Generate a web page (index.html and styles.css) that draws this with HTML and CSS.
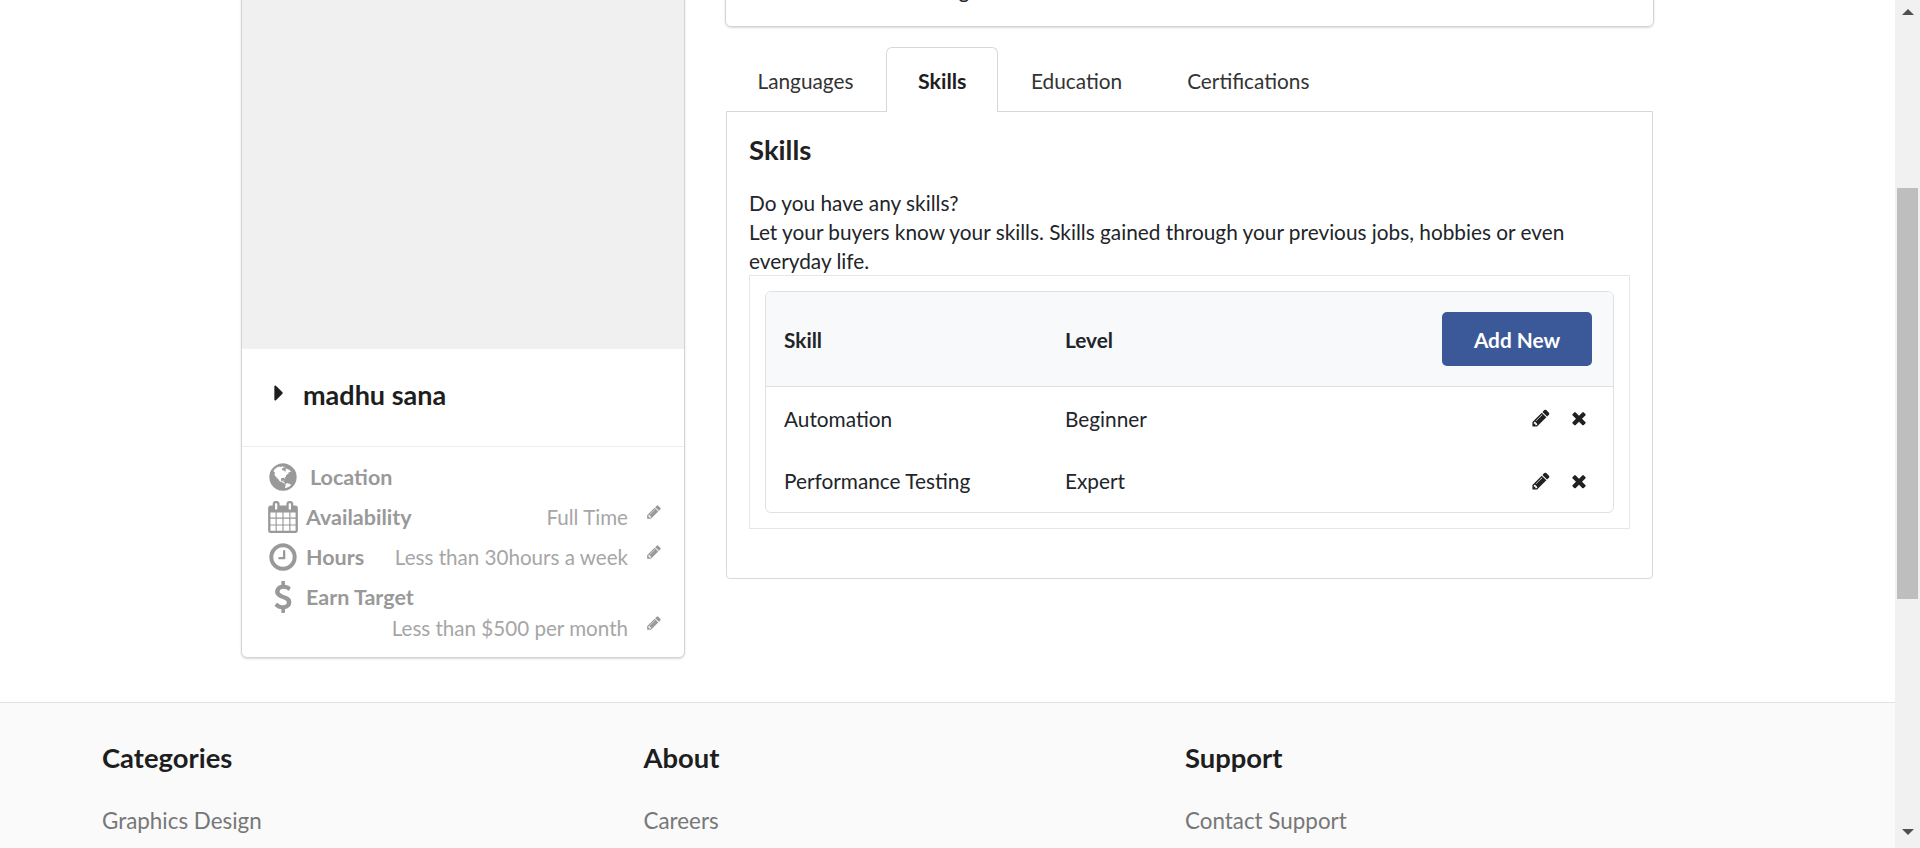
FILE: index.html
```html
<!DOCTYPE html>
<html lang="en">
<head>
    <meta charset="UTF-8">
    <title>Profile</title>
    <link rel="stylesheet" href="styles.css">
</head>
<body>
    <svg class="icon-defs" xmlns="http://www.w3.org/2000/svg">
        <symbol id="i-pencil" viewBox="0 0 1792 1792"><path d="M491 1536l91-91-235-235-91 91v107h128v128h107zm523-928q0-22-22-22-10 0-17 7l-542 542q-7 7-7 17 0 22 22 22 10 0 17-7l542-542q7-7 7-17zm-54-192l416 416-832 832h-416v-416zm683 96q0 53-37 90l-166 166-416-416 166-165q36-38 90-38 53 0 91 38l235 234q37 39 37 91z"/></symbol>
        <symbol id="i-times" viewBox="0 0 1792 1792"><path d="M1490 1322q0 40-28 68l-136 136q-28 28-68 28t-68-28l-294-294-294 294q-28 28-68 28t-68-28l-136-136q-28-28-28-68t28-68l294-294-294-294q-28-28-28-68t28-68l136-136q28-28 68-28t68 28l294 294 294-294q28-28 68-28t68 28l136 136q28 28 28 68t-28 68l-294 294 294 294q28 28 28 68z"/></symbol>
        <symbol id="i-caret" viewBox="0 0 1792 1792"><path d="M1152 896q0 26-19 45l-448 448q-19 19-45 19t-45-19-19-45v-896q0-26 19-45t45-19 45 19l448 448q19 19 19 45z"/></symbol>
        <symbol id="i-clock" viewBox="0 0 1792 1792"><path d="M1024 544v448q0 14-9 23t-23 9h-320q-14 0-23-9t-9-23v-64q0-14 9-23t23-9h224v-352q0-14 9-23t23-9h64q14 0 23 9t9 23zm416 352q0-148-73-273t-198-198-273-73-273 73-198 198-73 273 73 273 198 198 273 73 273-73 198-198 73-273zm224 0q0 209-103 385.5t-279.5 279.5-385.5 103-385.5-103-279.5-279.5-103-385.5 103-385.5 279.5-279.5 385.5-103 385.5 103 279.5 279.5 103 385.5z"/></symbol>
        <symbol id="i-calendar" viewBox="0 0 1792 1792"><path d="M192 1664h288v-288h-288v288zm352 0h320v-288h-320v288zm-352-352h288v-320h-288v320zm352 0h320v-320h-320v320zm-352-384h288v-288h-288v288zm736 736h320v-288h-320v288zm-384-736h320v-288h-320v288zm768 736h288v-288h-288v288zm-384-352h320v-320h-320v320zm-352-864v-288q0-13-9.5-22.5t-22.5-9.5h-64q-13 0-22.5 9.5t-9.5 22.5v288q0 13 9.5 22.5t22.5 9.5h64q13 0 22.5-9.5t9.5-22.5zm736 864h288v-320h-288v320zm-384-384h320v-288h-320v288zm384 0h288v-288h-288v288zm32-480v-288q0-13-9.5-22.5t-22.5-9.5h-64q-13 0-22.5 9.5t-9.5 22.5v288q0 13 9.5 22.5t22.5 9.5h64q13 0 22.5-9.5t9.5-22.5zm384-64v1280q0 52-38 90t-90 38h-1408q-52 0-90-38t-38-90v-1280q0-52 38-90t90-38h128v-96q0-66 47-113t113-47h64q66 0 113 47t47 113v96h384v-96q0-66 47-113t113-47h64q66 0 113 47t47 113v96h128q52 0 90 38t38 90z"/></symbol>
        <symbol id="i-dollar" viewBox="0 0 1792 1792"><path d="M1362 1185q0 153-99.5 263.5t-258.5 136.5v175q0 14-9 23t-23 9h-135q-13 0-22.5-9.5t-9.5-22.5v-175q-66-9-127.5-31t-101.5-44.5-74-48-46.5-37.5-17.5-18q-17-21-2-41l103-135q7-10 23-12 15-2 24 9l2 2q113 99 243 125 37 8 74 8 81 0 142.5-43t61.5-122q0-28-15-53t-33.5-42-58.5-37.5-66-32-80-32.5q-39-16-61.5-25t-61.5-26.5-62.5-31-56.5-35.5-53.5-42.5-43.5-49-35.5-58-21-66.5-8.5-78q0-138 98-242t255-134v-180q0-13 9.5-22.5t22.5-9.5h135q14 0 23 9t9 23v176q57 6 110.5 23t87 33.5 63.5 37.5 39 29 15 14q17 18 5 38l-81 146q-8 15-23 16-14 3-27-7-3-3-14.5-12t-39-26.5-58.5-32-74.5-26-85.5-11.5q-95 0-155 43t-60 111q0 26 8.5 48t29.5 41.5 39.5 33 56 31 60.5 27 70 27.5q53 20 81 31.5t76 35 75.5 42.5 62 50 53 63.5 31.5 76.5 13 94z"/></symbol>
        <symbol id="i-globe" viewBox="0 0 1792 1792"><path d="M896 128q209 0 385.5 103t279.5 279.5 103 385.5-103 385.5-279.5 279.5-385.5 103-385.5-103-279.5-279.5-103-385.5 103-385.5 279.5-279.5 385.5-103zm274 521q-2 1-9.5 9.5t-13.5 9.5q2 0 4.5-5t5-11 3.5-7q6-7 22-15 14-6 52-12 34-8 51 11-2-2 9.5-13t14.5-12q3-2 15-4.5t15-7.5l2-22q-12 1-17.5-7t-6.5-21q0 2-6 8 0-7-4.5-8t-11.5 1-9 1q-10-3-15-7.5t-8-16.5-4-15q-2-5-9.5-11t-9.5-10q-1-2-2.5-5.5t-3-6.5-4-5.5-5.5-2.5-7 5-7.5 10-4.5 5q-3-2-6-1.5t-4.5 1-4.5 3-5 3.5q-3 2-8.5 3t-8.5 2q15-5-1-11-10-4-16-3 9-4 7.5-12t-8.5-14h5q-1-4-8.5-8.5t-17.5-8.5-13-6q-8-5-34-9.5t-33-.5q-5 6-4.5 10.5t4 14 3.5 12.5q1 6-5.5 13t-6.5 12q0 7 14 15.5t10 21.5q-3 8-16 16t-16 12q-5 8-1.5 18.5t10.5 16.5q2 2 1.5 4t-3.5 4.5-5.5 4-6.5 3.5l-3 2q-11 5-20.5-6t-13.5-26q-7-25-16-30-23-8-29 1-5-13-41-26-25-9-58-4 6-1 0-15-7-15-19-12 3-6 4-17.5t1-13.5q3-13 12-23 1-1 7-8.5t9.5-13.5.5-6q35 4 50-11 5-5 11.5-17t10.5-17q9-6 14-5.5t14.5 5.5 14.5 5q14 1 15.5-11t-7.5-20q12 1 3-17-5-7-8-9-12-4-27 5-8 4 2 8-1-1-9.5 10.5t-16.5 17.5-14-5q-1-1-5.5-13.5t-9.5-13.5q-8 0-16 15 3-8-11-15t-24-8q19-12-8-27-7-4-20.5-5t-19.5 4q-5 7-5.5 11.5t5 8 10.5 5.5 11.5 4 8.5 3q14 10 8 14-2 1-8.5 3.5t-11.5 4.5-6 4q-3 4 0 14t-2 14q-5-5-9-17.5t-7-16.5q7 9-25 6l-10-1q-4 0-16 2t-20.5 1-13.5-8q-4-8 0-20 1-4 4-2-4-3-11-9.5t-10-8.5q-46 15-94 41 6 1 12-1 5-2 13-6.5t10-5.5q34-14 42-7l5-5q14 16 20 25-7-4-30-1-20 6-22 12 7 12 5 18-4-3-11.5-10t-14.5-11-15-5q-16 0-22 1-146 80-235 222 7 7 12 8 4 1 5 9t2.5 11 11.5-3q9 8 3 19 1-1 44 27 19 17 21 21 3 11-10 18-1-2-9-9t-9-4q-3 5 .5 18.5t10.5 12.5q-7 0-9.5 16t-2.5 35.5-1 23.5l2 1q-3 12 5.5 34.5t21.5 19.5q-13 3 20 43 6 8 8 9 3 2 12 7.5t15 10 10 10.5q4 5 10 22.5t14 23.5q-2 6 9.5 20t10.5 23q-1 0-2.5 1t-2.5 1q3 7 15.5 14t15.5 13q1 3 2 10t3 11 8 2q2-20-24-62-15-25-17-29-3-5-5.5-15.5t-4.5-14.5q2 0 6 1.5t8.5 3.5 7.5 4 2 3q-3 7 2 17.5t12 18.5 17 19 12 13q6 6 14 19.5t0 13.5q9 0 20 10.5t17 19.5q5 8 8 26t5 24q2 7 8.5 13.5t12.5 9.5l16 8 13 7q5 2 18.5 10.5t21.5 11.5q10 4 16 4t14.5-2.5 13.5-3.5q15-2 29 15t21 21q36 19 55 11-2 1 .5 7.5t8 15.5 9 14.5 5.5 8.5q5 6 18 15t18 15q6-4 7-9-3 8 7 20t18 10q14-3 14-32-31 15-49-18 0-1-2.5-5.5t-4-8.5-2.5-8.5 0-7.5 5-3q9 0 10-3.5t-2-12.5-4-13q-1-8-11-20t-12-15q-5 9-16 8t-16-9q0 1-1.5 5.5t-1.5 6.5q-13 0-15-1 1-3 2.5-17.5t3.5-22.5q1-4 5.5-12t7.5-14.5 4-12.5-4.5-9.5-17.5-2.5q-19 1-26 20-1 3-3 10.5t-5 11.5-9 7q-7 3-24 2t-24-5q-13-8-22.5-29t-9.5-37q0-10 2.5-26.5t3-25-5.5-24.5q3-2 9-9.5t10-10.5q2-1 4.5-1.5t4.5 0 4-1.5 3-6q-1-1-4-3-3-3-4-3 7 3 28.5-1.5t27.5 1.5q15 11 22-2 0-1-2.5-9.5t-.5-13.5q5 27 29 9 3 3 15.5 5t17.5 5q3 2 7 5.5t5.5 4.5 5-.5 8.5-6.5q10 14 12 24 11 40 19 44 7 3 11 2t4.5-9.5 0-14-1.5-12.5l-1-8v-18l-1-8q-15-3-18.5-12t1.5-18.5 15-18.5q1-1 8.5-3.5t15.5-6.5 12-8q21-19 15-35 7 0 11-9-1 0-5-3t-7.5-5-4.5-2q9-5 2-16 5-3 7.5-11t7.5-10q9 12 21 2 8-8 1-16 5-7 20.5-10.5t18.5-9.5q7 2 8-2t1-12 3-12q4-5 15-9t13-5l17-11q3-4 0-4 18 2 31-11 10-11-6-20 3-6-3-9.5t-15-5.5q3-1 11.5-.5t10.5-1.5q15-10-7-16-17-5-43 12zm-163 877q206-36 351-189-3-3-12.5-4.5t-12.5-3.5q-18-7-24-8 1-7-2.5-13t-8-9-12.5-8-11-7q-2-2-7-6t-7-5.5-7.5-4.5-8.5-2-10 1l-3 1q-3 1-5.5 2.5t-5.5 3-4 3 0 2.5q-21-17-36-22-5-1-11-5.5t-10.5-7-10-1.5-11.5 7q-5 5-6 15t-2 13q-7-5 0-17.5t2-18.5q-3-6-10.5-4.5t-12 4.5-11.5 8.5-9 6.5-8.5 5.5-8.5 7.5q-3 4-6 12t-5 11q-2-4-11.5-6.5t-9.5-5.5q2 10 4 35t5 38q7 31-12 48-27 25-29 40-4 22 12 26 0 7-8 20.5t-7 21.5q0 6 2 16z"/></symbol>
    </svg>

    <div class="window">
        <div class="page">
            <div class="content">
                <aside class="profile-card">
                    <div class="profile-photo"></div>
                    <div class="profile-name">
                        <svg class="caret"><use href="#i-caret"/></svg>
                        <span>madhu sana</span>
                    </div>
                    <div class="profile-info">
                        <div class="info-row info-location">
                            <svg class="info-icon"><use href="#i-globe"/></svg>
                            <span class="info-label">Location</span>
                        </div>
                        <div class="info-row">
                            <svg class="info-icon"><use href="#i-calendar"/></svg>
                            <span class="info-label">Availability</span>
                            <span class="info-value">Full Time</span>
                            <svg class="info-edit"><use href="#i-pencil"/></svg>
                        </div>
                        <div class="info-row">
                            <svg class="info-icon"><use href="#i-clock"/></svg>
                            <span class="info-label">Hours</span>
                            <span class="info-value">Less than 30hours a week</span>
                            <svg class="info-edit"><use href="#i-pencil"/></svg>
                        </div>
                        <div class="info-row">
                            <svg class="info-icon"><use href="#i-dollar"/></svg>
                            <span class="info-label">Earn Target</span>
                        </div>
                        <div class="info-row info-second">
                            <span class="info-value">Less than $500 per month</span>
                            <svg class="info-edit"><use href="#i-pencil"/></svg>
                        </div>
                    </div>
                </aside>

                <section class="details">
                    <div class="summary-card">Let the market see things</div>

                    <div class="tabs">
                        <a class="tab">Languages</a>
                        <a class="tab active">Skills</a>
                        <a class="tab">Education</a>
                        <a class="tab">Certifications</a>
                    </div>

                    <div class="tab-content">
                        <h2>Skills</h2>
                        <p>Do you have any skills?<br>Let your buyers know your skills. Skills gained through your previous jobs, hobbies or even everyday life.</p>

                        <div class="skills-box">
                            <div class="skills-table">
                                <div class="skills-row skills-head">
                                    <span>Skill</span>
                                    <span>Level</span>
                                    <button class="add-btn">Add New</button>
                                </div>
                                <div class="skills-row">
                                    <span>Automation</span>
                                    <span>Beginner</span>
                                    <div class="row-actions">
                                        <svg class="edit-icon"><use href="#i-pencil"/></svg>
                                        <svg class="remove-icon"><use href="#i-times"/></svg>
                                    </div>
                                </div>
                                <div class="skills-row">
                                    <span>Performance Testing</span>
                                    <span>Expert</span>
                                    <div class="row-actions">
                                        <svg class="edit-icon"><use href="#i-pencil"/></svg>
                                        <svg class="remove-icon"><use href="#i-times"/></svg>
                                    </div>
                                </div>
                            </div>
                        </div>
                    </div>
                </section>
            </div>

            <footer class="footer">
                <div class="footer-col">
                    <h3>Categories</h3>
                    <a>Graphics Design</a>
                </div>
                <div class="footer-col">
                    <h3>About</h3>
                    <a>Careers</a>
                </div>
                <div class="footer-col">
                    <h3>Support</h3>
                    <a>Contact Support</a>
                </div>
            </footer>
        </div>

        <div class="scrollbar">
            <div class="arrow-up"></div>
            <div class="thumb"></div>
            <div class="arrow-down"></div>
        </div>
    </div>
</body>
</html>
```

FILE: styles.css
```css
body {
    font-family: 'Lato', 'Liberation Sans', sans-serif;
    font-size: 20.8px;
    color: #212529;
    background: white;
    margin: 0;
    padding: 0;
}

.icon-defs {
    display: none;
}

.window {
    display: flex;
    height: 848px;
    overflow: hidden;
}

.page {
    width: 1895px;
    height: 848px;
    overflow: hidden;
}

/* page is scrolled down, so the top of the content is cut off */
.content {
    display: flex;
    height: 702px;
    margin-top: -60px;
    padding-left: 241px;
    padding-bottom: 60px;
}

.profile-card {
    width: 444px;
    height: 718px;
    box-sizing: border-box;
    background: white;
    border: 1px solid #d4d4d5;
    border-radius: 6px;
    box-shadow: 0 1px 2px rgba(0, 0, 0, 0.15);
}

.profile-photo {
    height: 408px;
    background: #f0f0f0;
}

.profile-name {
    display: flex;
    align-items: center;
    height: 98px;
    box-sizing: border-box;
    padding: 0 0 7px 24px;
    border-bottom: 1px solid #eeeeee;
    font-size: 27px;
    font-weight: 700;
    color: #1e1e1e;
}

.caret {
    width: 26px;
    height: 26px;
    margin-right: 11px;
    margin-bottom: 2px;
    fill: #1e1e1e;
}

.profile-info {
    padding: 10px 22px 0 25px;
}

.info-row {
    display: flex;
    align-items: center;
    height: 40px;
}

.info-second {
    height: 34px;
    margin-top: -6px;
}

.info-icon {
    width: 32px;
    height: 32px;
    margin-right: 7px;
    fill: #999999;
    flex-shrink: 0;
}

.info-location .info-icon {
    margin-right: 11px;
}

.info-label {
    font-size: 21.5px;
    font-weight: 700;
    color: #999999;
}

.info-value {
    margin-left: auto;
    font-size: 20.6px;
    color: #a6a6a6;
}

.info-edit {
    width: 16px;
    height: 16px;
    margin-left: 18px;
    margin-bottom: 10px;
    fill: #999999;
}

.details {
    width: 928px;
    margin-left: 41px;
}

.summary-card {
    width: 929px;
    height: 87px;
    box-sizing: border-box;
    margin-left: -1px;
    padding: 37px 23px 0;
    line-height: 24px;
    border: 1px solid #d4d4d5;
    border-radius: 6px;
    box-shadow: 0 1px 2px rgba(0, 0, 0, 0.15);
    overflow: hidden;
}

.tabs {
    display: flex;
    margin-top: 20px;
    margin-left: -1px;
    height: 64px;
    position: relative;
    z-index: 1;
}

.tab {
    display: flex;
    align-items: center;
    height: 65px;
    box-sizing: border-box;
    padding: 1px 31.5px 0;
    border: 1px solid transparent;
    border-bottom: none;
    border-radius: 6px 6px 0 0;
    color: #333333;
}

.tab.active {
    padding: 1px 31px 0;
    border-color: #d8d8d8;
    background: white;
    font-size: 21.4px;
    font-weight: 700;
    color: #1e1e1e;
}

.tab-content {
    width: 927px;
    height: 468px;
    box-sizing: border-box;
    padding: 0 22px;
    border: 1px solid #d8d8d8;
    border-radius: 0 0 4px 4px;
}

.tab-content h2 {
    margin: 0;
    padding-top: 20px;
    font-size: 27.5px;
    line-height: 36px;
    font-weight: 700;
    color: #212121;
}

.tab-content p {
    margin: 20px 0 0;
    line-height: 29px;
}

.skills-box {
    padding: 15px;
    border: 1px solid #e6e6e6;
}

.skills-table {
    border: 1px solid #dee2e6;
    border-radius: 6px;
    overflow: hidden;
}

.skills-row {
    display: grid;
    grid-template-columns: 281px 1fr auto;
    align-items: center;
    height: 62.5px;
    padding: 0 21px 0 18px;
}

.skills-head {
    height: 94px;
    background: #f8f9fa;
    border-bottom: 1px solid #dee2e6;
    font-weight: 700;
}

.add-btn {
    width: 150px;
    height: 54px;
    background: #3b5998;
    color: white;
    border: none;
    border-radius: 5px;
    font-family: inherit;
    font-size: 20.8px;
    font-weight: 700;
}

.row-actions {
    display: flex;
    align-items: center;
    gap: 18px;
    padding-right: 3px;
}

.edit-icon,
.remove-icon {
    width: 20px;
    height: 20px;
    fill: #212121;
}

.footer {
    display: flex;
    height: 146px;
    box-sizing: border-box;
    padding-left: 102px;
    background: #fafafa;
    border-top: 1px solid #e3e3e3;
}

.footer-col {
    width: 541.5px;
}

.footer-col h3 {
    margin: 37px 0 0;
    font-size: 27.4px;
    line-height: 36px;
    font-weight: 700;
    color: #1e1e1e;
}

.footer-col a {
    display: block;
    margin-top: 30px;
    font-size: 22.4px;
    line-height: 30px;
    color: #777777;
}

.scrollbar {
    display: flex;
    flex-direction: column;
    align-items: center;
    width: 25px;
    height: 848px;
    background: #f1f1f1;
}

.arrow-up {
    width: 0;
    height: 0;
    margin-top: 9px;
    border-left: 6px solid transparent;
    border-right: 6px solid transparent;
    border-bottom: 6px solid #505050;
}

.arrow-down {
    width: 0;
    height: 0;
    margin-top: 230px;
    border-left: 6px solid transparent;
    border-right: 6px solid transparent;
    border-top: 6px solid #505050;
}

.thumb {
    width: 21px;
    height: 411px;
    margin-top: 173px;
    background: #bebebe;
}
```
